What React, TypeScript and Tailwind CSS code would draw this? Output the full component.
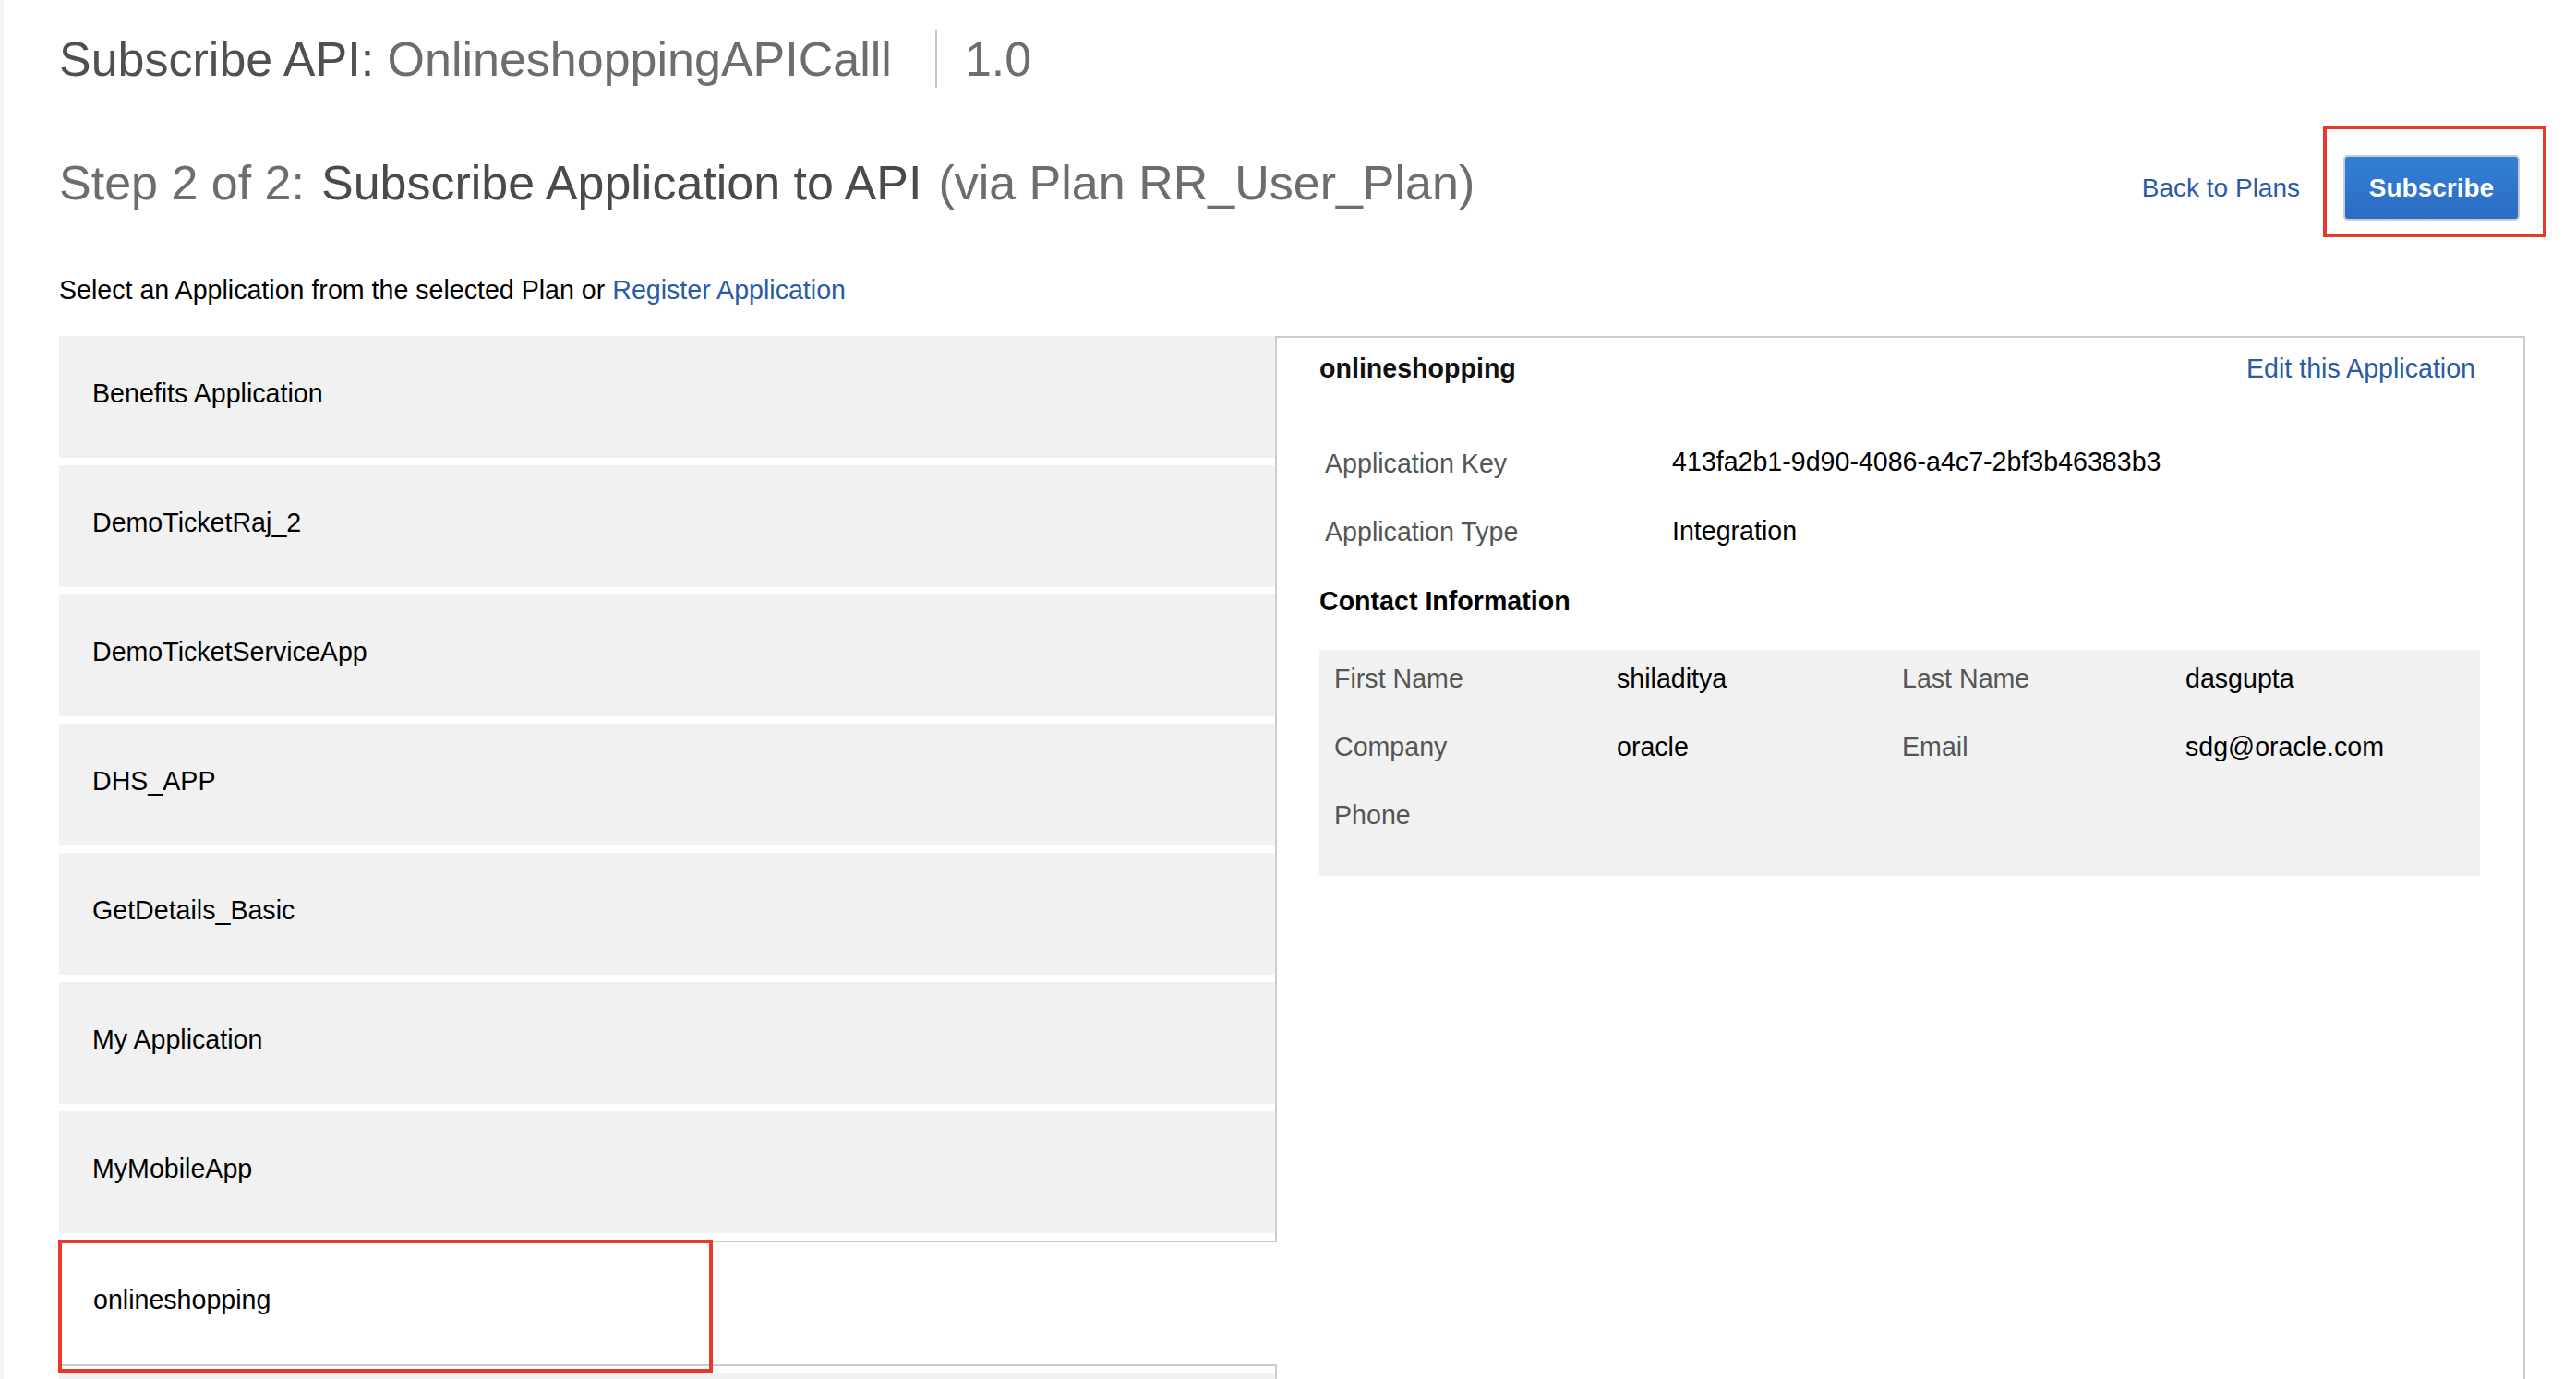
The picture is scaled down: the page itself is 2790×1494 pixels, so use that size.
const apps = [
  "Benefits Application",
  "DemoTicketRaj_2",
  "DemoTicketServiceApp",
  "DHS_APP",
  "GetDetails_Basic",
  "My Application",
  "MyMobileApp",
  "onlineshopping",
];

const selected = "onlineshopping";

const contact = [
  ["First Name", "shiladitya", "Last Name", "dasgupta"],
  ["Company", "oracle", "Email", "sdg@oracle.com"],
  ["Phone", "", "", ""],
];

function AppItem({ name }: { name: string }) {
  if (name === selected) {
    return (
      <div className="relative z-10 -mr-[2px] flex h-[136px] shrink-0 items-center border-y-2 border-[#cccccc] bg-white pb-[8px] pl-[37px]">
        <span className="text-[28.6px] leading-[32px] text-black">{name}</span>
        <div className="absolute -left-px -top-[3px] h-[144px] w-[709px] border-4 border-[#e63b2a]" />
      </div>
    );
  }
  return (
    <div className="flex h-[132px] shrink-0 items-center bg-[#f1f1f1] pb-[8px] pl-[36px]">
      <span className="text-[28.6px] leading-[32px] text-black">{name}</span>
    </div>
  );
}

export default function App() {
  return (
    <div className="flex h-[1494px] w-[2790px] flex-col overflow-hidden border-l-4 border-[#f4f4f4] bg-white pl-[60px] font-['Liberation_Sans',Arial,sans-serif]">
      {/* page title */}
      <div className="mt-[33px] flex h-[62px] items-center">
        <h1 className="text-[52px] leading-[60px]">
          <span className="text-[#505050]">Subscribe API: </span>
          <span className="text-[#6d6d6d]">OnlineshoppingAPICalll</span>
        </h1>
        <span className="ml-[47px] mr-[30px] h-[62px] w-[2px] bg-[#c8c8c8]" />
        <span className="text-[52px] leading-[60px] text-[#6d6d6d]">1.0</span>
      </div>

      {/* step heading + actions */}
      <div className="mt-[73px] flex items-start justify-between pr-[61px]">
        <h2 className="flex gap-[18px] text-[52px] leading-[60px]">
          <span className="text-[#6d6d6d]">Step 2 of 2:</span>
          <span className="text-[#4a4a4a]">Subscribe Application to API</span>
          <span className="text-[#6d6d6d]">(via Plan RR_User_Plan)</span>
        </h2>
        <div className="flex items-center gap-[47px]">
          <a className="text-[28px] leading-[32px] text-[#2a5ba6]">Back to Plans</a>
          <button className="relative flex h-[71px] w-[191px] items-center justify-center rounded-[5px] border-2 border-[#c3ccd8] bg-linear-to-b from-[#3380d6] to-[#2c6cc2] text-[28px] font-bold text-white">
            Subscribe
            <span className="absolute -bottom-[20px] -left-[24px] -right-[31px] -top-[34px] border-4 border-[#e63b2a]" />
          </button>
        </div>
      </div>

      <p className="mt-[59px] text-[28.6px] leading-[32px] text-black">
        Select an Application from the selected Plan or <a className="text-[#2a5ba6]">Register Application</a>
      </p>

      {/* list + details */}
      <div className="mt-[34px] flex flex-1">
        <div className="flex w-[1319px] shrink-0 flex-col gap-2 border-r-2 border-[#cccccc]">
          {apps.map((name) => (
            <AppItem key={name} name={name} />
          ))}
          <div className="h-[132px] shrink-0 bg-[#f1f1f1]" />
        </div>

        <div className="w-[1352px] shrink-0 border-r-2 border-t-2 border-[#cccccc] pl-[46px] pr-[47px] pt-[17px]">
          <div className="flex items-center justify-between text-[28.6px] leading-[32px]">
            <span className="font-bold text-[#111]">onlineshopping</span>
            <a className="pr-[5px] text-[#2a5ba6]">Edit this Application</a>
          </div>

          <div className="mt-[71px] grid grid-cols-[376px_1fr] gap-y-[42px] pl-[6px] text-[28.6px] leading-[32px]">
            <span className="text-[#555]">Application Key</span>
            <span className="-mt-[2px] text-black">413fa2b1-9d90-4086-a4c7-2bf3b46383b3</span>
            <span className="text-[#555]">Application Type</span>
            <span className="-mt-[1px] text-black">Integration</span>
          </div>

          <h3 className="mt-[43px] text-[28.6px] font-bold leading-[32px] text-black">Contact Information</h3>

          <div className="mt-[37px] grid grid-cols-[306px_309px_307px_1fr] gap-y-[42px] bg-[#f1f1f1] pb-[50px] pl-[16px] pt-[15px] text-[28.6px] leading-[32px]">
            {contact.map((row) =>
              row.map((cell, i) => (
                <span key={row[0] + i} className={i % 2 === 0 ? "text-[#555]" : "text-black"}>
                  {cell}
                </span>
              ))
            )}
          </div>
        </div>
      </div>
    </div>
  );
}
